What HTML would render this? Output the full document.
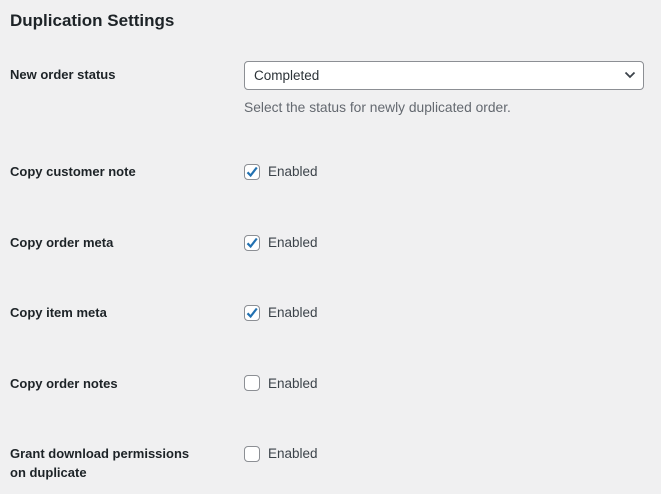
<!DOCTYPE html>
<html><head><style>
body{margin:0;background:#f0f0f1;font-family:"Liberation Sans",sans-serif;color:#1d2327;width:661px;height:494px;overflow:hidden;position:relative}
.a{position:absolute}
h2{position:absolute;left:10px;top:11px;margin:0;font-size:17px;font-weight:600}
.l{position:absolute;left:10px;font-size:13px;font-weight:bold;line-height:19px}
.sel{left:244px;top:61px;width:398px;height:27px;border:1px solid #8c8f94;border-radius:4px;background:#fff;box-sizing:content-box}
.sel span{position:absolute;left:9px;top:6px;font-size:13.5px;color:#2c3338}
.desc{left:244px;top:100px;font-size:13.8px;color:#646970}
.cb{position:absolute;left:244px;width:14px;height:14px;border:1px solid #8c8f94;border-radius:4px;background:#fff}
.en{position:absolute;left:268px;font-size:13.5px;color:#3c434a}
</style></head><body>
<h2>Duplication Settings</h2>
<div class="l" style="top:65px">New order status</div>
<div class="a sel"><span>Completed</span>
<svg class="a" style="right:7px;top:8px" width="12" height="10" viewBox="0 0 12 10"><path d="M1.5 2.5 6 7l4.5-4.5" fill="none" stroke="#3c434a" stroke-width="1.8"/></svg></div>
<div class="a desc">Select the status for newly duplicated order.</div>

<div class="l" style="top:162px">Copy customer note</div>
<div class="cb" style="top:164px"><svg width="14" height="14" viewBox="0 0 14 14"><path d="M2.5 7.3 5.6 10.5 11.8 2.5" fill="none" stroke="#2271b1" stroke-width="2.2"/></svg></div>
<div class="en" style="top:164px">Enabled</div>

<div class="l" style="top:233px">Copy order meta</div>
<div class="cb" style="top:235px"><svg width="14" height="14" viewBox="0 0 14 14"><path d="M2.5 7.3 5.6 10.5 11.8 2.5" fill="none" stroke="#2271b1" stroke-width="2.2"/></svg></div>
<div class="en" style="top:235px">Enabled</div>

<div class="l" style="top:303px">Copy item meta</div>
<div class="cb" style="top:305px"><svg width="14" height="14" viewBox="0 0 14 14"><path d="M2.5 7.3 5.6 10.5 11.8 2.5" fill="none" stroke="#2271b1" stroke-width="2.2"/></svg></div>
<div class="en" style="top:305px">Enabled</div>

<div class="l" style="top:374px">Copy order notes</div>
<div class="cb" style="top:375px"></div>
<div class="en" style="top:376px">Enabled</div>

<div class="l" style="top:444px">Grant download permissions<br>on duplicate</div>
<div class="cb" style="top:446px"></div>
<div class="en" style="top:446px">Enabled</div>
</body></html>
